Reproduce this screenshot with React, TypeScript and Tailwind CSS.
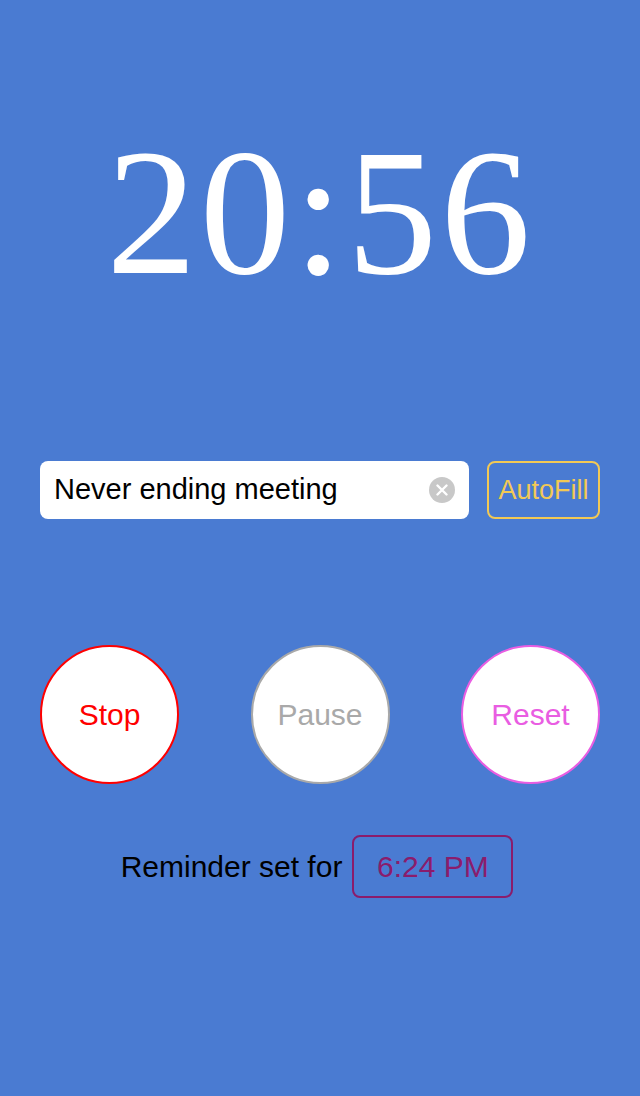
const sans = { fontFamily: '"Liberation Sans", Arial, sans-serif' };

const CircleButton = ({ label, ring, text }: { label: string; ring: string; text: string }) => (
    <button className={`w-[139px] h-[139px] rounded-full bg-white border-2 ${ring} ${text} text-[30px] flex items-center justify-center`}>
        {label}
    </button>
);

const App = () => {
    return (
        <div className="w-[640px] h-[1096px] bg-[#4a7bd2] flex flex-col" style={sans}>
            <div className="h-[420px] flex justify-center pt-[122px]">
                <p className="text-white text-[181px] leading-none font-['Liberation_Serif',serif] tracking-[3px]">20:56</p>
            </div>

            <div className="flex px-[40px] mt-[41px] gap-[18px]">
                <div className="w-[429px] h-[58px] bg-white rounded-[8px] flex items-center pl-[14px] pr-[14px]">
                    <span className="flex-1 text-black text-[29px]">Never ending meeting</span>
                    <span className="w-[26px] h-[26px] rounded-full bg-[#c8c8c8] flex items-center justify-center">
                        <svg width="12" height="12" viewBox="0 0 12 12">
                            <path d="M1.5 1.5 L10.5 10.5 M10.5 1.5 L1.5 10.5" stroke="white" strokeWidth="2.4" strokeLinecap="round" />
                        </svg>
                    </span>
                </div>
                <button className="w-[113px] h-[58px] border-2 border-[#f2c955] rounded-[8px] text-[#f2c955] text-[27px]">AutoFill</button>
            </div>

            <div className="flex justify-between px-[40px] mt-[126px]">
                <CircleButton label="Stop" ring="border-[#ff0000]" text="text-[#ff0000]" />
                <CircleButton label="Pause" ring="border-[#a9a9a9]" text="text-[#a9a9a9]" />
                <CircleButton label="Reset" ring="border-[#e95de2]" text="text-[#e95de2]" />
            </div>

            <div className="flex justify-center items-center gap-[10px] mt-[51px] pr-[6px]">
                <span className="text-black text-[30px]">Reminder set for</span>
                <span className="w-[161px] h-[63px] border-2 border-[#8a1c6c] rounded-[8px] text-[#8a1c6c] text-[30px] flex items-center justify-center">6:24 PM</span>
            </div>
        </div>
    );
};

export default App;
